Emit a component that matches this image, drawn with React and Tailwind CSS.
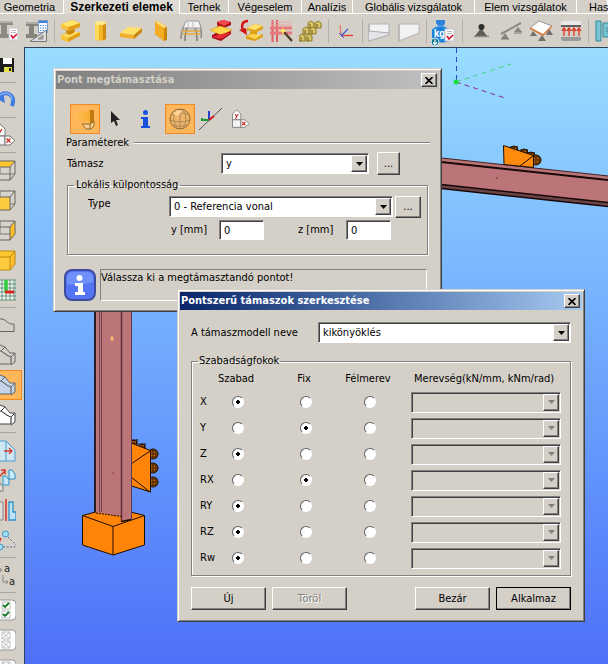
import { useState } from "react";
import clsx from "clsx";

const TABS = [
  { label: "Geometria", width: "w-[64px] pr-1" },
  { label: "Szerkezeti elemek", width: "w-[116px]", active: true },
  { label: "Terhek", width: "w-[49px]" },
  { label: "Végeselem", width: "w-[73px]" },
  { label: "Analízis", width: "w-[51px]" },
  { label: "Globális vizsgálatok", width: "w-[122px]" },
  { label: "Elem vizsgálatok", width: "w-[102px]" },
  { label: "Has", width: "w-[31px] pl-3" },
];

const AXES = [
  { id: "X", value: 0 },
  { id: "Y", value: 1 },
  { id: "Z", value: 0 },
  { id: "RX", value: 1 },
  { id: "RY", value: 0 },
  { id: "RZ", value: 0 },
  { id: "Rw", value: 0 },
];

const MODES = ["Szabad", "Fix", "Félmerev"];

const raised =
  "border border-t-white border-l-white border-b-[#404040] border-r-[#404040] shadow-[inset_-1px_-1px_0_#808080]";
const sunken =
  "border border-t-[#808080] border-l-[#808080] border-b-white border-r-white shadow-[inset_1px_1px_0_#404040]";

/* ---------- icons ---------- */

function Svg({ children, className = "size-6", viewBox = "0 0 24 24" }) {
  return (
    <svg viewBox={viewBox} className={clsx("shrink-0", className)} fill="none" aria-hidden="true">
      {children}
    </svg>
  );
}

function Check({ x, y }) {
  return (
    <g>
      <rect x={x} y={y} width="9" height="12" fill="#fff" stroke="#c4c4cc" />
      <path d={`M${x + 2} ${y + 2.5}h5M${x + 2} ${y + 4.5}h5`} stroke="#bbb" />
      <path d={`M${x + 2} ${y + 7}l2 3 4-4`} stroke="#d01030" strokeWidth="1.6" />
    </g>
  );
}

function SectionCheckIcon() {
  return (
    <Svg>
      <path d="M2 2h16v4h-6v9h6v4H2v-4h4V6H2z" fill="#8b8b84" />
      <path d="M2 2h16v2H2z" fill="#b0b0a8" />
      <Check x={14} y={9} />
    </Svg>
  );
}

function SectionCalcIcon() {
  return (
    <Svg>
      <path d="M1 3h12v4H9v8h3v4H1v-4h3V7H1z" fill="#85857e" />
      <path d="M1 3h12v2H1z" fill="#adada5" />
      <rect x="13.500" y="1.500" width="9" height="12" fill="#fff" stroke="#7a9ccc" />
      <path d="M14 3h8" stroke="#3a80d8" strokeWidth="2" />
      <path d="M15 6.500h7M15 9h7M15 11.500h7" stroke="#4488dd" strokeDasharray="1.500 1" />
      <path d="M5 22.500L21.500 11v11.500z" fill="#ddd" stroke="#777" />
      <path d="M13 20l5-4v4z" fill="#aaa" stroke="#888" />
    </Svg>
  );
}

function BeamIcon() {
  return (
    <Svg>
      <path d="M2 5L13 1l8 3v4l-5 2v4l5-1v4L9 23l-7-3v-4l5-2v-3L2 9z" fill="#e0a01a" />
      <path d="M2 5l11-4 8 3-12 4z" fill="#ffe568" />
      <path d="M2 5l7 3v4L2 9z" fill="#f6c53c" />
      <path d="M9 19l12-6-6 0-6 1-7 2z" fill="#ffdf60" />
      <path d="M2 16l7 3v4l-7-3z" fill="#f6c53c" />
      <path d="M7 11l3 1 5-2v4l-5 2-3-2z" fill="#c98a12" />
    </Svg>
  );
}

function ColumnIcon() {
  return (
    <Svg>
      <path d="M6 4v16c2 2 9 2 11 0V4z" fill="#f1b423" />
      <path d="M6 4v16c1 1 3 1.500 4 1.500V4z" fill="#ffd95a" />
      <path d="M14 4v17c1 0 2-.5 3-1V4z" fill="#d08b10" />
      <ellipse cx="11.500" cy="4" rx="5.500" ry="2" fill="#ffe98c" />
    </Svg>
  );
}

function PlateIcon() {
  return (
    <Svg>
      <path d="M1 14L9 8l14 1-8 7z" fill="#ffe069" />
      <path d="M1 14l14 2v4L1 18z" fill="#f0b02a" />
      <path d="M15 16l8-7v4l-8 7z" fill="#c8860d" />
    </Svg>
  );
}

function WallIcon() {
  return (
    <Svg>
      <path d="M6 3l3-1 9 6v13l-3 1-9-7z" fill="#c8860d" />
      <path d="M6 3l9 6v13l-9-7z" fill="#f2ad22" />
      <path d="M6 3l3-1 9 6-3 1z" fill="#ffe27a" />
    </Svg>
  );
}

function FrameIcon() {
  return (
    <Svg>
      <path d="M2 20c0-8 2-11 5-16h13c2 5 3 9 2 15" stroke="#888" strokeWidth="1.500" />
      <path d="M6 22c0-6 0-9 2-13M18 22c0-6 0-9-2-13" stroke="#777" strokeWidth="1.500" />
      <path d="M7 2h13l2 7H4z" fill="#f4f4f8" stroke="#999" />
      <path d="M3 12h18M4 15h17" stroke="#e5a83c" strokeWidth="1.500" />
      <path d="M9 3v6M14 3v6" stroke="#bbb" />
    </Svg>
  );
}

function SteelIcon() {
  return (
    <Svg>
      <path d="M8 3l6-2 8 2v3l-7 3-1 4 8-1v3l-10 7-9-3v-3l6-3z" fill="#a90d18" />
      <path d="M8 3l6-2 8 2-7 4z" fill="#f04a50" />
      <path d="M1 11L11 7l12 4-11 5z" fill="#ffd84c" stroke="#d79a13" strokeWidth=".6" />
      <path d="M3 18l9-3 10-1-10 6z" fill="#e8303a" />
    </Svg>
  );
}

function ConvertIcon() {
  return (
    <Svg>
      <path d="M8 9l8-4 8 2v3l-6 3v4l6-2v3l-8 4-9-2v-3l4-2v-4L8 12z" fill="#dda01a" />
      <path d="M8 9l8-4 8 2-8 4z" fill="#ffe069" />
      <path d="M8 17l5-2 9 1-6 4z" fill="#ffd650" />
      <path d="M9 2C3 2 2 7 4 11" stroke="#d41414" strokeWidth="2.500" />
      <path d="M0 11l7-2 1 7z" fill="#d41414" />
    </Svg>
  );
}

function WandIcon() {
  return (
    <Svg>
      <path d="M3.500 1v22M8 1v22" stroke="#e25b62" strokeWidth="2" />
      <path d="M1 9h22M1 14h22" stroke="#e8797d" strokeWidth="3" />
      <path d="M2 3h20M2 6h20" stroke="#eea3a3" />
      <path d="M15 13l8 9" stroke="#50402c" strokeWidth="2.500" />
      <path d="M14 8l1 3 3 1-3 1-1 3-1-3-3-1 3-1z" fill="#ffe35c" />
    </Svg>
  );
}

function NumberingIcon() {
  return (
    <Svg>
      <g stroke="#8c7a22" fill="#d9c46a">
        <path d="M9 4l3-2 3 2v5H9zM16 4l3-2 3 2v5h-6z" />
        <path d="M4 10l3-2 3 2v5H4zM11 10l3-2 3 2v5h-6z" />
        <path d="M0 17l3-2 3 2v5H0zM7 17l3-2 3 2v5H7z" />
      </g>
      <path d="M11 9V5M18 9V5M6 15v-4M13 15v-4M2 22v-4M9 22v-4" stroke="#6b5c12" />
    </Svg>
  );
}

function AxesIcon() {
  return (
    <Svg>
      <path d="M8 16L7 6" stroke="#e07868" strokeWidth="1.300" />
      <path d="M8 16.500h12" stroke="#e04030" strokeWidth="1.300" />
      <path d="M8 17l7-7" stroke="#3858d8" strokeWidth="1.300" />
      <path d="M6 14l5 5" stroke="#3858d8" />
    </Svg>
  );
}

function TaperIcon({ split }) {
  return (
    <Svg>
      <path d={split ? "M2 5h20v9L2 16z" : "M2 5h20v9L2 22z"} fill="#f2f2f4" stroke="#b4b4b8" />
      <path d="M2 5v18" stroke="#aaa" />
      {split && <path d="M2 12l20 2v2L2 22" fill="#e4e4e8" stroke="#aaa" />}
    </Svg>
  );
}

function WeightIcon() {
  return (
    <Svg viewBox="0 0 24 32" className="h-8 w-6">
      <path d="M5 5h9v3l-2 4H8L5 8z" fill="#2d83d8" />
      <path d="M1 15c2-5 15-5 17 0v11c-4 2-13 2-17 0z" fill="#1d82dc" />
      <path d="M2 14c3-4 12-4 15 0" stroke="#71b8f4" />
      <text x="3" y="22" fontSize="10" fill="#fff" className="font-['Roboto',sans-serif] font-bold">kg</text>
      <Check x={14} y={14} />
      <circle cx="4" cy="27" r="4" fill="#0b7795" stroke="#d7eef5" />
      <path d="M4 24.500v5M2 27.500l2 2 2-2" stroke="#fff" strokeWidth="1.200" />
    </Svg>
  );
}

function PointSupportIcon() {
  return (
    <Svg>
      <path d="M12 9l6 8H6z" fill="#5c5c58" />
      <path d="M5 17.500h15" stroke="#8b8b86" strokeWidth="1.500" />
      <circle cx="12.500" cy="8" r="3" fill="#2e2e2c" />
    </Svg>
  );
}

function LineSupportIcon() {
  return (
    <Svg>
      <path d="M2 15L22 4" stroke="#8b8b88" strokeWidth="2" />
      <path d="M6 14l4 6H2zM19 8l4 5h-8z" fill="#85857f" />
      <path d="M2 20h8M15 14h8" stroke="#7a7a74" />
    </Svg>
  );
}

function AreaSupportIcon() {
  return (
    <Svg>
      <path d="M1 9l9-7 13 5-9 9z" fill="#fff" stroke="#999" />
      <path d="M1 9l13 7 9-9" stroke="#d9783a" strokeWidth="1.500" />
      <path d="M4 12l4 5H1zM13 16l4 6H9zM20 10l4 6h-7z" fill="#6f6f69" />
    </Svg>
  );
}

function SpringIcon() {
  return (
    <Svg>
      <path d="M2 3l3-1h16l1 1v4H2z" fill="#e8e8e8" />
      <path d="M2 6h20v2H2z" fill="#5f5f5f" />
      <path d="M2 18h20v3l-2 1H4l-2-1z" fill="#9a9a9a" />
      <path d="M5 17v-7M10 17v-7M15 17v-7M20 17v-7M3 12l2-3 2 3M8 12l2-3 2 3M13 12l2-3 2 3M18 12l2-3 2 3" stroke="#dd3525" strokeWidth="1.300" />
    </Svg>
  );
}

function JointIcon() {
  return (
    <Svg>
      <path d="M3 2h5v20H3zM10 4h13v5H14v4h9v5H10z" fill="#79c4d2" stroke="#2f8798" />
    </Svg>
  );
}

function SaveIcon() {
  return (
    <Svg>
      <path d="M2 5h20v14H2z" fill="#1c1c1c" />
      <path d="M11 5h9v6h-9z" fill="#fff" />
      <path d="M2 11h6v6H2z" fill="#a88d10" />
      <path d="M12 14h8v5h-8z" fill="#e6df4a" />
      <path d="M17 15h2v3h-2z" fill="#222" />
    </Svg>
  );
}

function UndoIcon() {
  return (
    <Svg>
      <path d="M7 8c8-6 17-1 13 10" stroke="#3f7be0" strokeWidth="4" />
      <path d="M11 3L3 10l10 5z" fill="#3f7be0" />
      <path d="M8 7c7-4 12-1 12 5" stroke="#8bb6f6" strokeWidth="1.200" />
    </Svg>
  );
}

function AxisTagIcon({ className }) {
  return (
    <Svg className={className}>
      <path d="M3 13V6l5-5 5 5v7z" fill="#fff" stroke="#777" />
      <path d="M3 13h10v9H3z" fill="#f2f2f2" stroke="#777" />
      <path d="M13 13h5l5 4.500-5 4.500h-5z" fill="#fff" stroke="#777" />
      <path d="M6 6l2 3 2-3M8 9l-1.500 3M14.500 15.500l4 4M18.500 15.500l-4 4" stroke="#c92a1e" strokeWidth="1.300" />
    </Svg>
  );
}

// which faces of the cube are filled
function CubeIcon({ top, front, side }) {
  return (
    <Svg>
      <path d="M3 8l5-5h15v13l-5 6H3z" fill="#d9d6cf" fillOpacity=".5" />
      <path d="M8 3v13H3M8 16h15" stroke="#77756e" />
      {top && <path d="M3 9l5-6h15l-5 6z" fill="#ffc62f" />}
      {front && <path d="M3 9h15v13H3z" fill="#ffcb3e" />}
      {side && <path d="M18 9l5-6v13l-5 6z" fill="#ffbf2a" />}
      <path d="M3 9h15v13H3zM3 9l5-6h15v13l-5 6M18 9l5-6" stroke={top && front ? "#bd860d" : "#67645c"} />
    </Svg>
  );
}

function GridIcon() {
  return (
    <Svg>
      <rect x="2" y="2" width="22" height="20" fill="#eef3ef" />
      <path d="M2 2h22v20H2zM6 2v20M10 2v20M14 2v20M18 2v20M22 2v20M2 6h22M2 10h22M2 14h22M2 18h22" stroke="#4d7d68" strokeWidth=".8" />
      <path d="M14 2v12" stroke="#30c83c" strokeWidth="3.500" />
      <path d="M13 14h9" stroke="#dd2020" strokeWidth="3" />
    </Svg>
  );
}

function ProfileIcon({ depth, fill = "none", stroke = "#666" }) {
  return (
    <Svg>
      {depth && <path d="M3 6l5-4 5 2 5 6h5v9l-4 3" fill={fill} stroke={stroke} />}
      <path d="M3 21V8h5c4 0 5 5 11 6v7z" fill={fill} stroke={stroke} strokeWidth="1.200" />
      {depth && <path d="M9 8l4-4M19 14l4-4" stroke={stroke} />}
    </Svg>
  );
}

function OutlineIcon() {
  return (
    <Svg>
      <path d="M3 18.500h19V11h-3c-4-1-6-5-9-5H3" stroke="#666" />
    </Svg>
  );
}

function SheetIcon() {
  return (
    <Svg>
      <path d="M2 3h12l9 9v11H2z" fill="#cfe6f3" stroke="#4b9ccc" />
      <path d="M14 3v20" stroke="#4b9ccc" />
      <path d="M12 13h8M17 10l3 3-3 3" stroke="#d33b2b" strokeWidth="1.300" />
    </Svg>
  );
}

function CopyIcon() {
  return (
    <Svg>
      <path d="M17 2h3l3 4v5h-6z" fill="#c8e9f8" stroke="#2d90c8" />
      <path d="M11 8h3l3 4v5h-6z" fill="#c8e9f8" stroke="#2d90c8" />
      <path d="M5 15h3l3 4v4H5z" fill="#ddd" stroke="#777" />
      <path d="M7 9l6-6M9 2h4v4" stroke="#d33b2b" strokeWidth="1.500" />
    </Svg>
  );
}

function MirrorIcon() {
  return (
    <Svg>
      <path d="M2 4h9v18H2z" fill="#ddd" stroke="#888" />
      <path d="M17 4h4v10h3v8h-7z" fill="#bfe3f5" stroke="#2d90c8" strokeWidth="1.300" />
      <path d="M14 1v22" stroke="#dd3028" strokeWidth="1.500" />
    </Svg>
  );
}

function RotateIcon() {
  return (
    <Svg>
      <circle cx="13.500" cy="6" r="3" fill="#a4dff4" stroke="#3c98c8" />
      <circle cx="8" cy="19" r="3" fill="#a4dff4" stroke="#3c98c8" />
      <path d="M16 9l8 8M11 19h13" stroke="#56718c" strokeDasharray="2 1.500" />
      <path d="M9 10l-2 5" stroke="#dd3028" strokeWidth="1.500" />
    </Svg>
  );
}

function RenameIcon() {
  return (
    <Svg>
      <path d="M3 7h7M8 5l2 2-2 2M11 12v7h5M14 17l2 2-2 2" stroke="#888" />
      <text x="12" y="9" fontSize="10" fill="#222" className="font-['DejaVu_Sans',sans-serif]">a</text>
      <text x="17" y="22" fontSize="10" fill="#222" className="font-['DejaVu_Sans',sans-serif]">a</text>
    </Svg>
  );
}

function ListIcon({ checked }) {
  return (
    <Svg>
      <path d="M0 2h20q4 0 4 4v12q0 4-4 4H0z" fill="#fff" stroke="#999" />
      <path d="M10 4h8v7h-8zM10 13h8v7h-8z" stroke="#bbb" />
      {checked ? (
        <path d="M11 7l2 2 4-4M11 16l2 2 4-4" stroke="#157a24" strokeWidth="1.800" />
      ) : (
        <path d="M11 5l6 5M17 5l-6 5M11 14l6 5M17 14l-6 5" stroke="#bbb" />
      )}
    </Svg>
  );
}

function SupportIcon() {
  return (
    <Svg>
      <defs>
        <linearGradient id="support-face">
          <stop offset="0" stopColor="#ffbe5c" />
          <stop offset="1" stopColor="#f2a51c" />
        </linearGradient>
      </defs>
      <path d="M3 5q8 2 14-2h4v11H3z" fill="url(#support-face)" />
      <path d="M17 3h4v13h-4z" fill="#c07a10" />
      <path d="M9 17h8l4-3v5l-3 3h-5z" fill="#f8cf8c" stroke="#7a5010" strokeWidth=".8" />
      <path d="M17 17v5" stroke="#7a5010" strokeWidth=".8" />
    </Svg>
  );
}

function PointerIcon() {
  return (
    <Svg>
      <path d="M8 4v12l3-2 2 5 2-1-2-5h4z" fill="#222" />
    </Svg>
  );
}

function InfoIcon() {
  return (
    <Svg>
      <circle cx="12.500" cy="5.500" r="2.500" fill="#1753dc" />
      <path d="M8 10h7v9h2v2H8v-2h2v-7H8z" fill="#1753dc" />
    </Svg>
  );
}

function SphereIcon() {
  return (
    <Svg>
      <circle cx="12" cy="12" r="10" fill="#eeb46a" stroke="#8b6a3d" />
      <path d="M3 8q9-4 18 0M2 13q10 4 20 0M5 18q7 3 14 0M8 3q-5 9 1 18M15 3q6 9 0 18M12 2v20" stroke="#a07f50" strokeWidth=".8" />
      <path d="M5 7l4-4 5 1-4 5z" fill="#ffd295" />
    </Svg>
  );
}

function LocalAxesIcon() {
  return (
    <Svg>
      <path d="M1 23L24 1" stroke="#555" />
      <path d="M11 13V4" stroke="#2a3fd0" strokeWidth="2" />
      <path d="M11 13H4v-2" stroke="#1c9a30" strokeWidth="2" />
      <path d="M11 13l5-4" stroke="#d01828" strokeWidth="2" />
    </Svg>
  );
}

/* ---------- small controls ---------- */

function SelectBox({ id, label, options = [""], disabled, className }) {
  return (
    <div className={clsx("flex h-[21px] p-px", sunken, disabled ? "bg-[#d4d0c8]" : "bg-white", className)}>
      <select
        id={id}
        aria-label={label}
        disabled={disabled}
        className="min-w-0 flex-1 appearance-none pl-[3px] outline-none"
      >
        {options.map((o) => (
          <option key={o}>{o}</option>
        ))}
      </select>
      <span className={clsx("flex w-4 items-center justify-center bg-[#d4d0c8]", raised)} aria-hidden="true">
        <svg viewBox="0 0 7 4" className="h-1 w-[7px]">
          <path d="M0 0h7L3.500 4z" fill={disabled ? "#808080" : "#000"} />
        </svg>
      </span>
    </div>
  );
}

function Button({ children, className, ...props }) {
  return (
    <button
      type="button"
      className={clsx("flex items-center justify-center bg-[#d4d0c8]", raised, className)}
      {...props}
    >
      {children}
    </button>
  );
}

function NumberField({ id, label }) {
  return (
    <div className="flex items-center">
      <label htmlFor={id} className="w-[48px]">{label}</label>
      <input id={id} defaultValue="0" className={clsx("h-5 w-[45px] bg-white pl-1 outline-none", sunken)} />
    </div>
  );
}

function Window({ title, active, className, children }) {
  return (
    <section
      aria-label={title}
      className={clsx(
        "absolute border border-t-[#d4d0c8] border-l-[#d4d0c8] border-r-[#404040] border-b-[#404040] bg-[#d4d0c8] p-[2px]",
        "shadow-[inset_1px_1px_0_#fff,inset_-1px_-1px_0_#808080]",
        className
      )}
    >
      <header
        className={clsx(
          "flex h-[18px] items-center justify-between bg-linear-to-r pr-[2px] pl-px font-bold",
          active ? "from-[#0a246a] to-[#a6caf0] text-white" : "from-[#808080] to-[#c0c0c0] text-[#d4d0c8]"
        )}
      >
        <h2>{title}</h2>
        <Button aria-label="Bezárás" className="h-[14px] w-4 text-black">
          <svg viewBox="0 0 8 7" className="h-[7px] w-2">
            <path d="M.5 0l7 7M7.500 0l-7 7" stroke="#000" strokeWidth="1.600" />
          </svg>
        </Button>
      </header>
      {children}
    </section>
  );
}

/* ---------- bars ---------- */

function TabBar() {
  return (
    <nav className="flex h-[14px] shrink-0 overflow-hidden font-['Liberation_Sans',Arial,sans-serif] text-[11px] leading-3">
      {TABS.map((tab) => (
        <button
          key={tab.label}
          type="button"
          className={clsx(
            "shrink-0 border-r border-r-white text-center whitespace-nowrap",
            tab.width,
            tab.active ? "bg-[#dedbd4] text-xs leading-3 font-bold" : "border-b border-b-white"
          )}
        >
          {tab.label}
        </button>
      ))}
    </nav>
  );
}

function ToolSeparator({ className = "w-1" }) {
  return (
    <span className={clsx("flex h-6 shrink-0 justify-center", className)}>
      <span className="w-px bg-[#b5b1a8]" />
    </span>
  );
}

const TOOL_GROUPS = [
  [["Szelvény ellenőrzés", <SectionCheckIcon />], ["Szelvény számítás", <SectionCalcIcon />]],
  [
    ["Gerenda", <BeamIcon />],
    ["Oszlop", <ColumnIcon />],
    ["Lemez", <PlateIcon />],
    ["Fal", <WallIcon />],
    ["Keret", <FrameIcon />],
    ["Acél elem", <SteelIcon />],
    ["Átalakítás", <ConvertIcon />],
    ["Varázsló", <WandIcon />],
    ["Számozás", <NumberingIcon />],
  ],
  [["Tengelyek", <AxesIcon />]],
  [["Kiékelés", <TaperIcon split />], ["Változó magasság", <TaperIcon />]],
  [["Súly", <WeightIcon />]],
  [
    ["Pont támasz", <PointSupportIcon />],
    ["Vonal támasz", <LineSupportIcon />],
    ["Felület támasz", <AreaSupportIcon />],
    ["Rugó", <SpringIcon />],
  ],
  [["Kapcsolat", <JointIcon />]],
];

function ToolBar() {
  return (
    <div className="-ml-2 flex h-[33px] shrink-0 items-center overflow-hidden">
      {TOOL_GROUPS.map((group, i) => (
        <div key={i} className="flex shrink-0 items-center">
          {i > 0 && <ToolSeparator className={i === 5 ? "w-2" : "w-1"} />}
          {group.map(([name, icon]) => (
            <button key={name} type="button" aria-label={name} className="flex h-8 w-[30px] items-center justify-center">
              {icon}
            </button>
          ))}
        </div>
      ))}
    </div>
  );
}

const SIDE_GROUPS = [
  [["Mentés", <SaveIcon />]],
  [["Visszavonás", <UndoIcon />]],
  [["Koordináták", <AxisTagIcon />]],
  [
    ["Felülnézet", <CubeIcon top />],
    ["Elölnézet", <CubeIcon front />],
    ["Oldalnézet", <CubeIcon side />],
    ["Axonometria", <CubeIcon top front side />],
    ["Raszter", <GridIcon />],
  ],
  [
    ["Vonalas nézet", <OutlineIcon />],
    ["Drótváz", <ProfileIcon depth />],
    ["Árnyalt", <ProfileIcon depth fill="#c3d3ea" />, true],
    ["Takart vonalas", <ProfileIcon depth fill="#fff" stroke="#444" />],
  ],
  [
    ["Eltolás", <SheetIcon />],
    ["Másolás", <CopyIcon />],
    ["Tükrözés", <MirrorIcon />],
    ["Forgatás", <RotateIcon />],
  ],
  [["Átnevezés", <RenameIcon />]],
  [
    ["Mind kijelöl", <ListIcon checked />],
    ["Kijelölés törlése", <ListIcon />],
    ["Kijelölés fordítása", <ListIcon />],
  ],
];

function SideBar() {
  return (
    <aside className="w-6 shrink-0 overflow-hidden pt-[3px]">
      {SIDE_GROUPS.map((group, i) => (
        <div key={i}>
          {i > 0 && (
            <div className="flex h-[5px] items-center">
              <span className="h-px w-4 bg-[#aaa69d]" />
            </div>
          )}
          {group.map(([name, icon, on]) => (
            <button
              key={name}
              type="button"
              aria-label={name}
              className={clsx(
                "-ml-2 flex h-[30px] w-[30px] items-center",
                on && "border-y border-r border-[#f08a1c] bg-[#ffb759]"
              )}
            >
              {icon}
            </button>
          ))}
        </div>
      ))}
    </aside>
  );
}

/* ---------- 3D scene ---------- */

function Ball({ x, y, r = 5 }) {
  return (
    <g stroke="#1c0d00" strokeWidth="1">
      <circle cx={x} cy={y} r={r} fill="#b86206" />
      <path
        d={`M${x - r} ${y}h${r * 2}M${x} ${y - r}v${r * 2}M${x - 4} ${y - 3}h8M${x - 4} ${y + 3}h8M${x + 3} ${y - 4}v8`}
        strokeWidth=".7"
      />
    </g>
  );
}

function Scene() {
  return (
    <svg className="absolute inset-0 size-full" fill="none" aria-hidden="true">
      <g transform="translate(-25 -48)">
        <path d="M456.500 48v34" stroke="#2c48b8" strokeDasharray="5 4" />
        <path d="M456 82l55-18" stroke="#3fd47c" strokeDasharray="5 4" />
        <path d="M456 82l49 16" stroke="#8c2c80" strokeDasharray="5 4" />
        <circle cx="456" cy="82" r="2.500" fill="#14e03c" />

        <path d="M400 153.500L1238 244v30L400 182.500z" fill="#bb7578" />
        <path d="M400 153.500L1238 244" stroke="#402020" />
        <path d="M400 157.500L1238 248.500" stroke="#180808" strokeWidth="2" />
        <path d="M400 180L1238 271v4L400 184z" fill="#6b4448" />
        <path d="M400 180L1238 271M400 184L1238 275" stroke="#180808" strokeWidth="1.500" />
        <circle cx="497" cy="178" r=".8" fill="#502020" />

        <Ball x={514} y={150} r={4} />
        <Ball x={524} y={153} r={4} />
        <Ball x={531} y={156} r={4} />
        <Ball x={536} y={160} r={5} />
        <path d="M503.500 145.500l30 10 0 12-29.500-3z" fill="#ff8a0c" stroke="#1c0d00" />
        <path d="M520 166l13-10" stroke="#1c0d00" />

        <Ball x={134} y={443} r={3} />
        <Ball x={142} y={447} r={3} />
        <Ball x={153} y={454} />
        <Ball x={153} y={468} />
        <Ball x={153} y={482} />
        <path d="M130 442.500l20.500 8v41.500L130 485.500z" fill="#ff8408" stroke="#1c0d00" />
        <path d="M131 464l19-13M131 477l19 15" stroke="#1c0d00" />

        <path d="M82.500 515.500l30-8 32 8v29.500l-31.500 10-30.500-10z" fill="#ff8408" stroke="#1c0d00" />
        <path d="M82.500 515.500l30.500 11 31.500-11M113 526.500V555" stroke="#1c0d00" />
        <path d="M95 300h36.500v219l-10 2.500v-5L95 512z" fill="#bb7578" />
        <path d="M96 513l25.500 3.500" stroke="#1c0d00" strokeDasharray="2 1" />
        <path d="M121 521.500l10.500-2" stroke="#1c0d00" strokeWidth="1.500" />
        <path d="M95 300v212" stroke="#2a1c24" strokeWidth="2" />
        <path d="M99.500 300v212M101.500 300v212" stroke="#70404a" />
        <path d="M121.500 300v221" stroke="#5c2c34" strokeWidth="1.500" />
        <path d="M131.500 300v220" stroke="#5c3c50" />
        <ellipse cx="112" cy="338.500" rx="1.500" ry="2.500" fill="#ffb766" />
        <circle cx="113" cy="473" r=".8" fill="#883040" />
      </g>
    </svg>
  );
}

/* ---------- dialogs ---------- */

const tool = "flex h-[30px] w-[30px] items-center justify-center";
const toolOn = "border border-[#ef8a26] bg-[#ffb759]";

function SupportWindow() {
  return (
    <Window title="Pont megtámasztása" className="top-5 left-7 w-[389px]">
      <div className="pt-[15px] pr-[9px] pb-2 pl-2">
        <div className="flex pl-[6px]">
          <button type="button" aria-label="Támasz" className={clsx(tool, toolOn)}><SupportIcon /></button>
          <button type="button" aria-label="Kijelölés" className={tool}><PointerIcon /></button>
          <button type="button" aria-label="Információ" className={tool}><InfoIcon /></button>
          <button type="button" aria-label="Globális" className={clsx(tool, toolOn, "ml-[5px]")}><SphereIcon /></button>
          <button type="button" aria-label="Lokális" className={tool}><LocalAxesIcon /></button>
          <button type="button" aria-label="Tengely" className={tool}><AxisTagIcon className="size-5" /></button>
        </div>

        <div className="mt-[2px] flex h-[14px] items-center gap-[5px] pl-[2px]">
          <span>Paraméterek</span>
          <span className="h-[2px] flex-1 border-t border-b border-t-[#808080] border-b-white" />
        </div>

        <div className="mt-[2px] flex h-[23px] items-center pr-[30px] pl-[3px]">
          <label htmlFor="tamasz" className="flex-1">Támasz</label>
          <SelectBox id="tamasz" options={["y"]} className="w-[148px]" />
          <Button aria-label="Támasz szerkesztése" className="ml-2 h-[23px] w-[23px]">...</Button>
        </div>

        <fieldset className="mr-[2px] ml-[3px] mt-[3px] border border-[#808080] pr-[6px] pb-[14px] pl-5 shadow-[1px_1px_0_#fff,inset_1px_1px_0_#fff]">
          <legend className="-ml-[14px] h-[14px] px-[2px] leading-[14px]">Lokális külpontosság</legend>
          <div className="mt-[3px] flex h-[23px] items-center">
            <label htmlFor="type" className="w-[81px] pb-[6px]">Type</label>
            <SelectBox id="type" options={["0 - Referencia vonal"]} className="min-w-0 flex-1" />
            <Button aria-label="Típus szerkesztése" className="ml-[2px] h-[22px] w-[26px]">...</Button>
          </div>
          <div className="mt-[2px] flex justify-between pr-[30px] pl-[83px]">
            <NumberField id="ecc-y" label="y [mm]" />
            <NumberField id="ecc-z" label="z [mm]" />
          </div>
        </fieldset>

        <div className="mt-[14px] flex items-start gap-1 pr-[3px]">
          <svg viewBox="0 0 32 32" className="size-8 shrink-0" aria-hidden="true">
            <rect x="1" y="1" width="30" height="30" rx="7" fill="#5474f2" stroke="#3b4c9c" strokeWidth="2" />
            <path d="M3 9q0-6 6-6h14q6 0 6 6v4q-13 5-26 2z" fill="#7090fc" />
            <circle cx="15.500" cy="9" r="3" fill="#fff" />
            <path d="M11 14h8v9h2v3H11v-3h3v-6h-3z" fill="#fff" />
          </svg>
          <p className="h-8 flex-1 border border-t-[#808080] border-r-white border-b-white border-l-[#808080] leading-4">
            Válassza ki a megtámasztandó pontot!
          </p>
        </div>
      </div>
    </Window>
  );
}

function EditWindow() {
  const [values, setValues] = useState(AXES.map((a) => a.value));

  return (
    <Window title="Pontszerű támaszok szerkesztése" active className="top-[241px] left-[152px] w-[408px]">
      <div className="px-[11px] pt-3 pb-[9px]">
        <div className="flex items-center">
          <label htmlFor="model" className="w-[127px]">A támaszmodell neve</label>
          <SelectBox id="model" options={["kikönyöklés"]} className="flex-1" />
        </div>

        <fieldset className="mt-[11px] border border-[#808080] pr-[9px] pb-1 pl-2 shadow-[1px_1px_0_#fff,inset_1px_1px_0_#fff]">
          <legend className="-ml-[2px] h-[14px] px-px leading-[14px]">Szabadságfokok</legend>
          <table className="w-full table-fixed">
            <colgroup>
              <col className="w-[4px]" />
              <col className="w-[68px]" />
              <col className="w-[68px]" />
              <col className="w-[60px]" />
              <col />
            </colgroup>
            <thead>
              <tr className="h-[21px]">
                <td />
                {MODES.map((m) => (
                  <th key={m} scope="col" className="p-0 pr-1 font-normal">{m}</th>
                ))}
                <th scope="col" className="p-0 pl-[14px] text-left font-normal whitespace-nowrap">
                  Merevség(kN/mm, kNm/rad)
                </th>
              </tr>
            </thead>
            <tbody>
              {AXES.map((axis, row) => (
                <tr key={axis.id} className="h-[26px]">
                  <th scope="row" className="p-0 text-left font-normal whitespace-nowrap">{axis.id}</th>
                  {MODES.map((m, i) => (
                    <td key={m} className="p-0 text-center">
                      <input
                        type="radio"
                        name={axis.id}
                        aria-label={`${axis.id} ${m}`}
                        checked={values[row] === i}
                        onChange={() => setValues(values.map((v, r) => (r === row ? i : v)))}
                        className="mx-auto block size-3 appearance-none rounded-full border border-t-[#606060] border-r-white border-b-white border-l-[#606060] bg-white checked:bg-[radial-gradient(circle,#000_2px,#fff_2px)]"
                      />
                    </td>
                  ))}
                  <td className="p-0 pl-[11px]">
                    <SelectBox label={`${axis.id} merevség`} disabled />
                  </td>
                </tr>
              ))}
            </tbody>
          </table>
        </fieldset>

        <div className="mt-[11px] flex gap-[6px]">
          <Button className="h-[23px] w-[75px]">Új</Button>
          <Button disabled className="h-[23px] w-[75px] text-[#808080] [text-shadow:1px_1px_0_#fff]">Töröl</Button>
          <Button className="ml-auto h-[23px] w-[75px]">Bezár</Button>
          <Button className="h-[23px] w-[75px] outline outline-black -outline-offset-1">Alkalmaz</Button>
        </div>
      </div>
    </Window>
  );
}

export default function App() {
  return (
    <div className="flex h-screen flex-col overflow-hidden bg-[#d4d0c8] font-['DejaVu_Sans_Condensed','DejaVu_Sans',sans-serif] text-[11px] leading-[14px] text-black">
      <TabBar />
      <ToolBar />
      <div className="flex min-h-0 flex-1">
        <SideBar />
        <main className="relative min-w-0 flex-1 overflow-hidden border-t border-l border-[#28435c] bg-linear-to-b from-[#99ddff] to-[#4f6ff8]">
          <Scene />
          <SupportWindow />
          <EditWindow />
        </main>
      </div>
    </div>
  );
}
